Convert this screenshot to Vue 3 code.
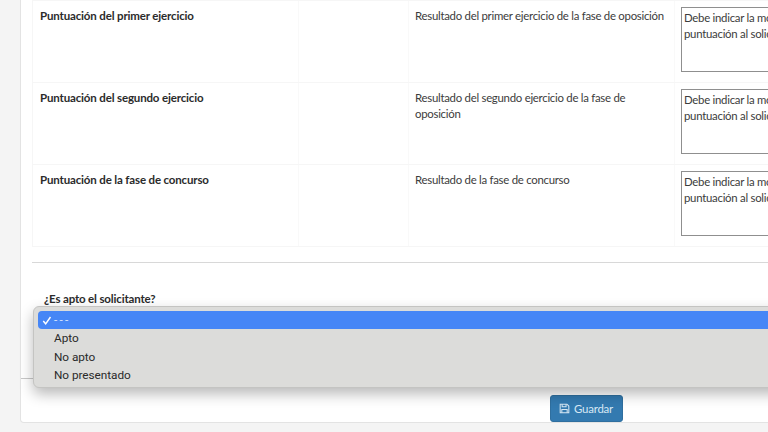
<script setup>
const rows = [
  { name: 'Puntuación del primer ejercicio', desc: 'Resultado del primer ejercicio de la fase de oposición' },
  { name: 'Puntuación del segundo ejercicio', desc: 'Resultado del segundo ejercicio de la fase de oposición' },
  { name: 'Puntuación de la fase de concurso', desc: 'Resultado de la fase de concurso' }
]
const note = 'Debe indicar la motivación de la\npuntuación al solicitante'
const options = ['Apto', 'No apto', 'No presentado']
</script>

<template>
  <div class="page">
    <main class="card">
      <section class="body">
        <div class="table">
          <div v-for="row in rows" :key="row.name" class="row">
            <div class="cell name">{{ row.name }}</div>
            <div class="cell"></div>
            <div class="cell desc">{{ row.desc }}</div>
            <div class="cell note">
              <textarea class="area" readonly :value="note"></textarea>
            </div>
          </div>
        </div>
        <hr class="rule" />
        <div class="field">
          <label class="label">¿Es apto el solicitante?</label>
          <div class="menu">
            <div class="option selected">
              <svg class="check" viewBox="0 0 12 12" aria-hidden="true">
                <path d="M1.5 6.6 4.4 10 10.2 1.8" />
              </svg>
              <span class="dash">---</span>
            </div>
            <div v-for="o in options" :key="o" class="option">{{ o }}</div>
          </div>
        </div>
      </section>
      <footer class="foot">
        <button class="save" type="button">
          <svg class="disk" viewBox="0 0 14 14" aria-hidden="true">
            <path d="M1.5 1.5h8.6l2.4 2.4v8.6h-11z" />
            <path d="M4 1.7v3.2h5V1.7" />
            <path d="M3.6 12.3V8.2h6.8v4.1" />
          </svg>
          <span>Guardar</span>
        </button>
      </footer>
    </main>
  </div>
</template>

<style>
html, body { margin: 0; overflow: hidden; }
</style>

<style scoped>
.page {
  width: 768px;
  height: 432px;
  overflow: hidden;
  background: #f4f4f4;
  padding-left: 20px;
  box-sizing: border-box;
  font-family: Lato, "Noto Sans", sans-serif;
  color: #333;
}
.card {
  width: 1132px;
  height: 423px;
  box-sizing: border-box;
  background: #fff;
  border: 1px solid #e3e3e3;
  border-top: 0;
  border-radius: 0 0 4px 4px;
  display: flex;
  flex-direction: column;
}
.body {
  height: 379px;
  padding: 0 11px;
  box-sizing: border-box;
}
.table {
  border: 1px solid #f6f6f6;
}
.row {
  display: grid;
  grid-template-columns: 266px 110px 266px 1fr;
  height: 81px;
  border-bottom: 1px solid #f6f6f6;
}
.row:last-child { border-bottom: 0; }
.cell {
  padding: 7px;
  border-right: 1px solid #f9f9f9;
  font-size: 11.4px;
  line-height: 16px;
  letter-spacing: -0.27px;
}
.name {
  font-size: 11.5px;
  font-weight: 700;
  letter-spacing: -0.15px;
  color: #2b2b2b;
}
.desc { padding-left: 6px; color: #3c3c3c; }
.note { padding: 6px; border-right: 0; }
.area {
  display: block;
  width: 300px;
  height: 65px;
  box-sizing: border-box;
  padding: 2px 2px;
  margin: 0;
  border: 1px solid #8f8f8f;
  border-radius: 0;
  outline: 0;
  resize: none;
  overflow: hidden;
  background: #fff;
  font: inherit;
  letter-spacing: inherit;
  color: #3c3c3c;
}
.rule {
  margin: 15px 0 0;
  border: 0;
  border-top: 1px solid #d8d8d8;
}
.field {
  position: relative;
  margin-top: 28px;
  padding-left: 12px;
}
.label {
  display: block;
  font-size: 11.5px;
  line-height: 16px;
  font-weight: 700;
  letter-spacing: -0.15px;
  color: #2b2b2b;
}
.menu {
  position: absolute;
  left: 1px;
  top: 15px;
  width: 1000px;
  height: 82px;
  box-sizing: border-box;
  padding: 4px;
  background: #dcdcda;
  border: 1px solid #c4c4c2;
  border-radius: 6px;
  box-shadow: 0 6px 14px rgba(0, 0, 0, 0.28);
  font-family: Roboto, "Liberation Sans", sans-serif;
  font-size: 11.8px;
  letter-spacing: -0.05px;
  color: #2a2a2a;
}
.option {
  height: 18.4px;
  line-height: 18.4px;
  padding-left: 16px;
  display: flex;
  align-items: center;
}
.selected {
  position: relative;
  background: #4686f6;
  color: #dbe7ff;
  border-radius: 4px;
}
.dash { letter-spacing: 2.2px; }
.check {
  position: absolute;
  left: 4px;
  top: 4px;
  width: 10px;
  height: 11px;
  fill: none;
  stroke: #fff;
  stroke-width: 1.7;
}
.foot {
  flex: 1;
  border-top: 1px solid #c8c8c8;
  padding-top: 16px;
  text-align: center;
}
.save {
  display: inline-flex;
  align-items: center;
  justify-content: center;
  gap: 4px;
  width: 73px;
  height: 27px;
  padding: 0;
  border: 1px solid #2f6f9f;
  border-radius: 3px;
  background: #337ab0;
  color: #d8e8f4;
  font: inherit;
  font-size: 11.4px;
  letter-spacing: -0.2px;
}
.disk {
  width: 11px;
  height: 11px;
  fill: none;
  stroke: #d8e8f4;
  stroke-width: 1.3;
}
</style>
